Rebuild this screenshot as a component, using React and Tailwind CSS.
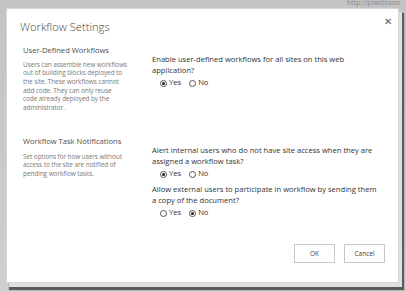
import React from "react";

const Radio = ({ checked, label }) => (
  <label className="flex items-center gap-[2px] text-[7.6px] text-[#333]">
    <span className="w-[7px] h-[7px] rounded-full border border-[#555] bg-white flex items-center justify-center">
      {checked && <span className="w-[3px] h-[3px] rounded-full bg-[#222]" />}
    </span>
    {label}
  </label>
);

const Question = ({ lines, yes }) => (
  <div className="flex flex-col">
    <p className="text-[7.6px] leading-[11px] text-[#333]">
      {lines.map((l, i) => (
        <span key={i} className="block">
          {l}
        </span>
      ))}
    </p>
    <div className="h-[10px] flex items-center gap-[8px] pl-[8px] mt-[2.5px]">
      <Radio checked={yes} label="Yes" />
      <Radio checked={!yes} label="No" />
    </div>
  </div>
);

const Section = ({ title, desc, children, descGap }) => (
  <div className="flex">
    <div className="w-[129px] shrink-0">
      <h3 className="text-[7.6px] leading-[11px] text-[#505050]">{title}</h3>
      <p className={`${descGap} text-[6.5px] tracking-[-0.1px] leading-[8.7px] text-[#7a7a7a]`}>
        {desc.map((l, i) => (
          <span key={i} className="block">
            {l}
          </span>
        ))}
      </p>
    </div>
    <div className="flex flex-col gap-[4.5px] pt-[9px]">{children}</div>
  </div>
);

export default function App() {
  return (
    <div
      className="w-[406px] h-[292px] overflow-hidden bg-gradient-to-b from-[#c3c3c3] to-[#cfcfcf] pl-[7px]"
      style={{ fontFamily: '"Open Sans", "Noto Sans", sans-serif' }}
    >
      {/* url strip above the dialog */}
      <div className="h-[9px] flex justify-end items-start pr-[6px] overflow-hidden">
        <span className="text-[7px] leading-[6px] text-[#8a8a8a]">http://plasticsoo</span>
      </div>

      {/* DIALOG */}
      <div className="w-[391px] h-[273px] bg-white shadow-[0_0_0_1px_#d6d6d6,3px_4px_0_1px_#e0e0e0,4px_6px_1px_2px_#5c5c5c] flex flex-col">
        <div className="flex items-start justify-between pl-[13px] pr-[6px] pt-[7px]">
          <h2 className="mt-[2px] text-[11.2px] leading-[18px] font-light text-[#444]">Workflow Settings</h2>
          <span className="text-[10px] leading-[11px] text-[#555]">✕</span>
        </div>

        <div className="flex flex-col pl-[16px] mt-[8.5px] gap-[22.8px]">
          <Section
            title="User-Defined Workflows"
            descGap="mt-[5px]"
            desc={[
              "Users can assemble new workflows",
              "out of building blocks deployed to",
              "the site.  These workflows cannot",
              "add code.  They can only reuse",
              "code already deployed by the",
              "administrator.",
            ]}
          >
            <Question
              yes
              lines={["Enable user-defined workflows for all sites on this web", "application?"]}
            />
          </Section>

          <Section
            title="Workflow Task Notifications"
            descGap="mt-[6px]"
            desc={[
              "Set options for how users without",
              "access to the site are notified of",
              "pending workflow tasks.",
            ]}
          >
            <Question
              yes
              lines={[
                "Alert internal users who do not have site access when they are",
                "assigned a workflow task?",
              ]}
            />
            <Question
              yes={false}
              lines={[
                "Allow external users to participate in workflow by sending them",
                "a copy of the document?",
              ]}
            />
          </Section>
        </div>

        <div className="mt-auto flex justify-end gap-[9px] pr-[13px] pb-[19px]">
          <button className="w-[41px] h-[19px] border border-[#c8c8c8] text-[6.5px] text-[#444] bg-white">
            OK
          </button>
          <button className="w-[41px] h-[19px] border border-[#c8c8c8] text-[6.5px] text-[#444] bg-white">
            Cancel
          </button>
        </div>
      </div>
    </div>
  );
}
